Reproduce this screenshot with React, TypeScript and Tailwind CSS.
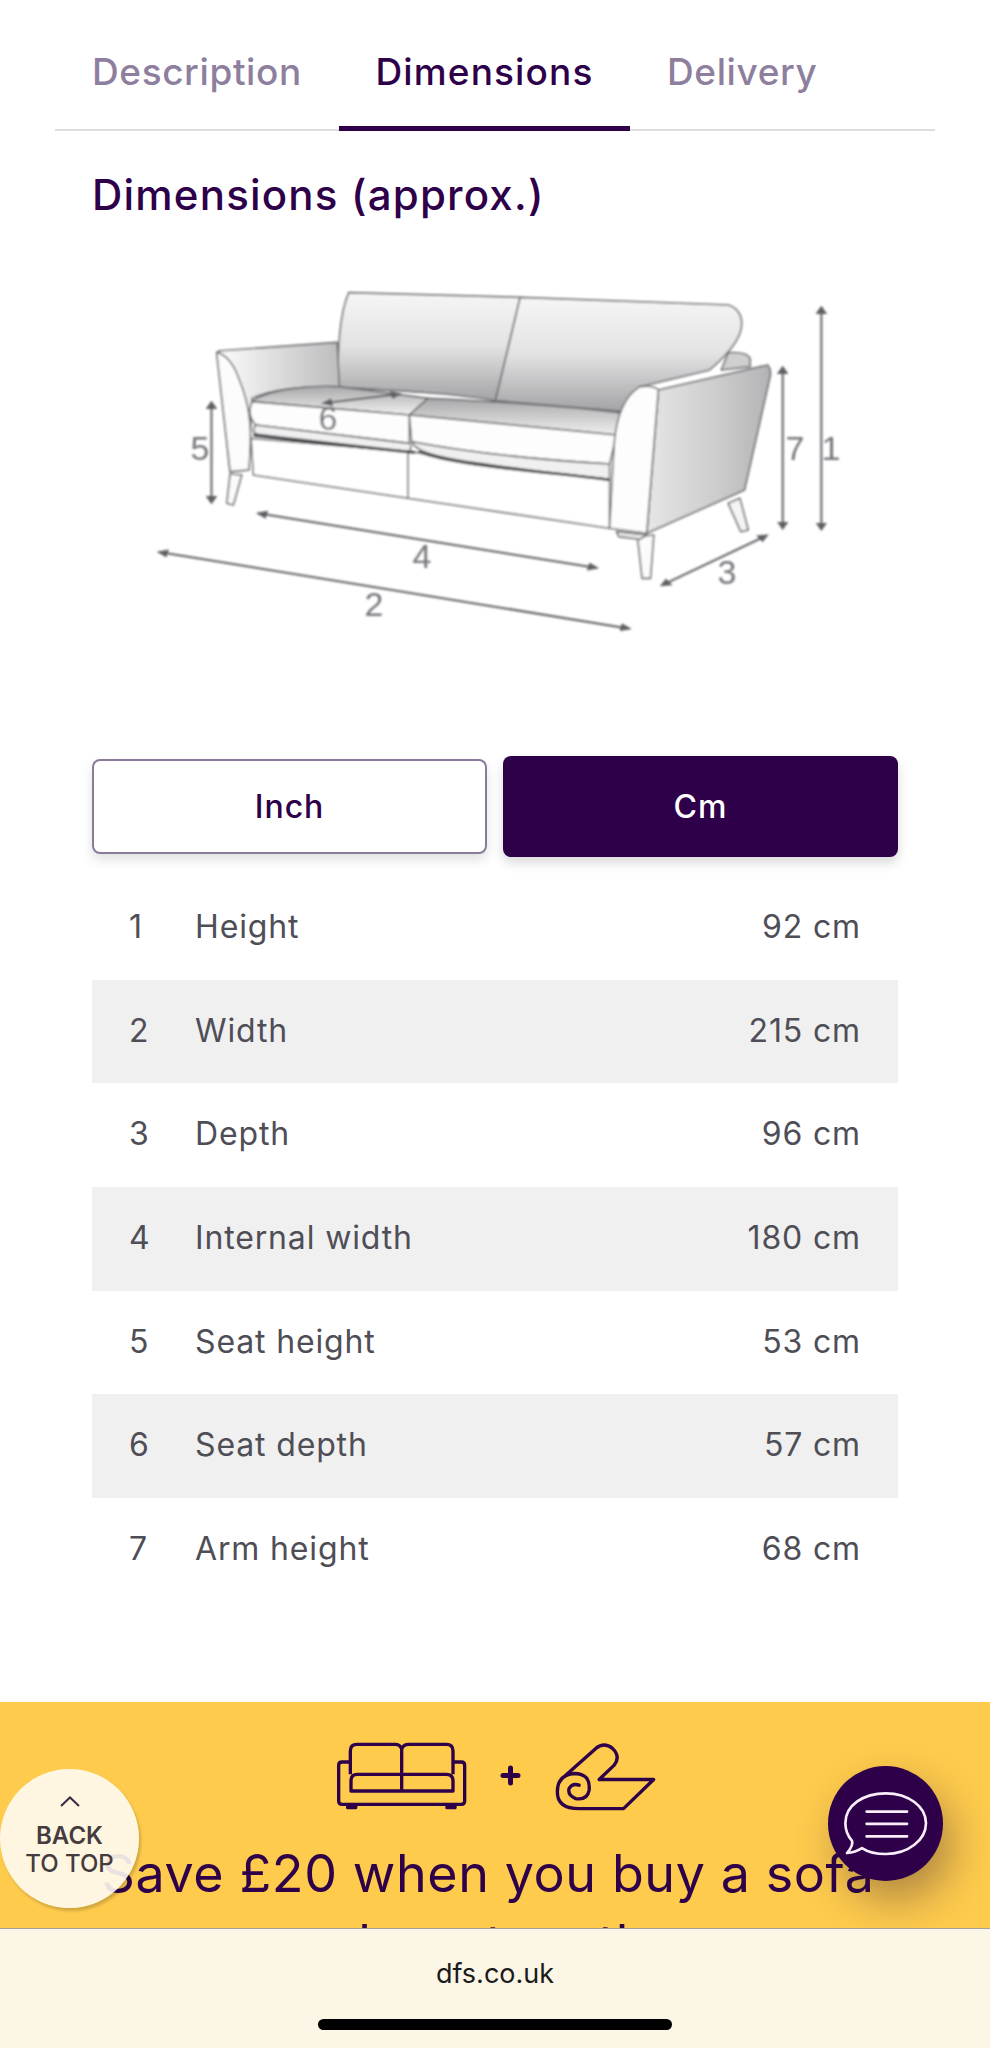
import React from "react";

const rows = [
  ["1", "Height", "92 cm"],
  ["2", "Width", "215 cm"],
  ["3", "Depth", "96 cm"],
  ["4", "Internal width", "180 cm"],
  ["5", "Seat height", "53 cm"],
  ["6", "Seat depth", "57 cm"],
  ["7", "Arm height", "68 cm"],
];

function Arrow({ x1, y1, x2, y2 }: { x1: number; y1: number; x2: number; y2: number }) {
  return (
    <line x1={x1} y1={y1} x2={x2} y2={y2} stroke="#5f5e63" strokeWidth="2" vectorEffect="non-scaling-stroke" markerStart="url(#ah)" markerEnd="url(#ah)" />
  );
}

function Sofa() {
  const line = { stroke: "#6d6c71", strokeWidth: 1.6, vectorEffect: "non-scaling-stroke" as const, strokeLinejoin: "round" as const };
  return (
    <svg viewBox="0 0 730 380" className="block w-[730px] h-[380px] ml-[130px]">
      <defs>
        <marker id="ah" viewBox="0 0 10 10" refX="8" refY="5" markerWidth="5" markerHeight="5" orient="auto-start-reverse">
          <path d="M0 0 L10 5 L0 10 Z" fill="#5f5e63" />
        </marker>
        <linearGradient id="bk" x1="0" y1="0" x2="0" y2="1">
          <stop offset="0" stopColor="#f6f6f6" />
          <stop offset="0.5" stopColor="#e2e2e3" />
          <stop offset="1" stopColor="#a3a3a5" />
        </linearGradient>
        <linearGradient id="side" x1="0" y1="0" x2="1" y2="0">
          <stop offset="0" stopColor="#e6e6e6" />
          <stop offset="0.6" stopColor="#cbcbcc" />
          <stop offset="1" stopColor="#b3b3b5" />
        </linearGradient>
        <linearGradient id="arm" x1="0" y1="0" x2="1" y2="0">
          <stop offset="0" stopColor="#fbfbfb" />
          <stop offset="1" stopColor="#bdbdbf" />
        </linearGradient>
        <linearGradient id="seat" x1="0" y1="0" x2="0" y2="1">
          <stop offset="0" stopColor="#a8a8aa" />
          <stop offset="1" stopColor="#f0f0f0" />
        </linearGradient>
        <filter id="soft"><feGaussianBlur stdDeviation="0.8" /></filter>
      </defs>
      <g filter="url(#soft)">
        <g transform="scale(0.46556 0.33333)">
          <path d="M1285 248 Q1325 245 1332 265 L1332 290 L1270 300 Z" fill="#cfcfd0" {...line} />
          <path d="M470 68 L838 82 L785 392 C700 370 560 360 447 352 C445 250 450 130 470 68 Z" fill="url(#bk)" {...line} />
          <path d="M838 82 L1285 105 C1310 115 1320 150 1310 190 C1300 230 1270 270 1245 300 L1095 350 L1060 425 L785 392 Z" fill="url(#bk)" {...line} />
          <path d="M190 243 L445 217 L450 352 C370 345 300 360 262 385 L255 600 L215 605 Z" fill="url(#arm)" {...line} />
          <path d="M186 247 L215 605 L255 600 C262 500 262 420 235 330 C225 290 210 255 186 247 Z" fill="#fcfcfc" {...line} />
          <path d="M260 505 L600 545 L1030 630 L1030 775 L265 615 Z" fill="#ffffff" {...line} />
          <path d="M597 540 L597 685" fill="none" {...line} />
          <path d="M262 395 C300 355 400 345 450 350 L640 385 L600 435 Z" fill="url(#seat)" {...line} />
          <path d="M640 385 C800 395 950 410 1058 430 L1045 495 L600 435 Z" fill="url(#seat)" {...line} />
          <path d="M262 395 L600 435 L600 520 L270 465 C255 440 255 420 262 395 Z" fill="#fdfdfd" {...line} />
          <path d="M600 435 L1045 495 L1030 582 C880 570 720 545 605 515 Z" fill="#fdfdfd" {...line} />
          <path d="M270 465 C262 480 265 490 275 493 C380 510 480 525 600 545 C605 530 605 525 600 520 Z" fill="#f0f0f0" {...line} />
          <path d="M605 515 C620 560 700 575 1030 628 L1030 582 C880 570 720 545 605 515 Z" fill="#f0f0f0" {...line} />
          <path d="M265 495 C340 508 480 530 612 548" fill="none" stroke="#38373e" strokeWidth="2.6" vectorEffect="non-scaling-stroke" />
          <path d="M620 545 C700 590 900 605 1030 630" fill="none" stroke="#38373e" strokeWidth="2.6" vectorEffect="non-scaling-stroke" />
          <path d="M1135 360 L1370 285 Q1378 300 1375 320 L1320 660 L1110 790 Z" fill="url(#side)" {...line} />
          <path d="M1095 350 Q1125 345 1135 360 L1110 790 L1030 775 L1040 520 C1045 440 1060 380 1095 350 Z" fill="#fdfdfd" {...line} />
          <path d="M215 612 L240 615 L222 705 L208 700 Z" fill="#fbfbfb" {...line} />
          <path d="M1285 700 L1310 685 L1328 780 L1312 785 Z" fill="#f4f4f4" {...line} />
          <path d="M1090 800 L1125 795 L1118 925 L1100 925 Z" fill="#fbfbfb" {...line} />
          <path d="M1045 785 L1110 795 L1095 808 L1050 800 Z" fill="#ececec" {...line} />
          <Arrow x1={1485} y1={112} x2={1485} y2={778} />
          <Arrow x1={1402} y1={292} x2={1402} y2={775} />
          <Arrow x1={175} y1={397} x2={175} y2={698} />
          <Arrow x1={415} y1={400} x2={580} y2={372} />
          <Arrow x1={275} y1={730} x2={1003} y2={894} />
          <Arrow x1={62} y1={846} x2={1073} y2={1076} />
          <Arrow x1={1142} y1={946} x2={1368} y2={796} />
        </g>
        <g fontFamily="'Liberation Sans', sans-serif" fontSize="34" fill="#77767b" textAnchor="middle">
          <text x="701" y="190">1</text>
          <text x="665" y="190">7</text>
          <text x="70" y="190">5</text>
          <text x="198" y="160">6</text>
          <text x="292" y="298">4</text>
          <text x="244" y="346">2</text>
          <text x="597" y="314">3</text>
        </g>
      </g>
    </svg>
  );
}

export default function App() {
  return (
    <div className="relative w-[990px] h-[2048px] overflow-hidden bg-white font-['Inter',sans-serif]">
      {/* Tabs */}
      <div className="mx-[55px] h-[131px] flex items-stretch border-b-2 border-[#dddcdf]">
        <div className="w-[284px] px-[37px] pt-[47px] text-[37px] leading-[50px] tracking-[0.6px] font-medium whitespace-nowrap text-[#8e7f9e]">Description</div>
        <div className="-mb-[2px] pt-[47px] w-[291px] text-center border-b-[5px] border-[#2e0049] text-[37px] leading-[50px] tracking-[1.15px] font-medium text-[#2e0049]">Dimensions</div>
        <div className="px-[37px] pt-[47px] text-[37px] leading-[50px] tracking-[0.6px] font-medium text-[#8e7f9e]">Delivery</div>
      </div>

      <h2 className="mt-[34px] ml-[92px] text-[42px] leading-[60px] tracking-[1.2px] font-medium text-[#2e0049]">Dimensions (approx.)</h2>

      <div className="mt-[45px]">
        <Sofa />
      </div>

      {/* Unit buttons */}
      <div className="mt-[106px] mx-[92px] grid grid-cols-2 gap-4 h-[101px]">
        <div className="my-[3px] flex items-center justify-center rounded-[8px] border-2 border-[#8b7b9b] bg-white text-[32px] tracking-[1px] font-medium text-[#2e0049] shadow-[0_6px_12px_rgba(0,0,0,0.12)]">Inch</div>
        <div className="flex items-center justify-center rounded-[8px] bg-[#2e0049] text-[32px] tracking-[1px] font-medium text-white shadow-[0_6px_12px_rgba(0,0,0,0.15)]">Cm</div>
      </div>

      {/* Table */}
      <div className="mt-[19px] mx-[92px]">
        {rows.map(([n, name, val], i) => (
          <div key={n} className={`flex items-center h-[103.7px] pb-[2px] text-[32px] tracking-[0.85px] text-[#4f4e56] ${i % 2 === 1 ? "bg-[#f0f0f1]" : ""}`}>
            <span className="ml-[37px] w-[66px]">{n}</span>
            <span>{name}</span>
            <span className="ml-auto mr-[37px]">{val}</span>
          </div>
        ))}
      </div>

      {/* Banner */}
      <div className="mt-[100px] bg-[#fecb4d] pt-[40px] h-[400px] flex flex-col items-center">
        <div className="flex items-center h-[68px] ml-[2px]">
          <svg viewBox="50 65 390 210" className="w-[130px] h-[70px]" fill="none" stroke="#2e0049" strokeWidth="10" strokeLinejoin="round">
            <path d="M90 165 V95 Q90 75 110 75 H225 Q238 75 244 88 Q250 75 265 75 H378 Q398 75 398 95 V165" />
            <path d="M244 88 V215" />
            <path d="M92 215 H398 V185 Q398 165 378 165 H110 Q92 165 92 185 Z" />
            <path d="M90 128 H65 Q55 128 55 138 V245 Q55 255 65 255 H423 Q433 255 433 245 V138 Q433 128 423 128 H398" />
            <path d="M82 255 V265 H106 V255 M380 255 V265 H404 V255" />
          </svg>
          <svg viewBox="0 0 21 21" className="ml-[33px] w-[21px] h-[21px]" stroke="#2e0049" strokeWidth="5" strokeLinecap="round">
            <path d="M10.5 3 V18 M3 10.5 H18" />
          </svg>
          <svg viewBox="700 60 305 215" className="ml-[33px] w-[102px] h-[72px]" fill="none" stroke="#2e0049" strokeWidth="10" strokeLinejoin="round" strokeLinecap="round">
            <path d="M735 165 L825 85 Q850 65 875 85 Q900 110 880 135 L835 178 H998 L908 265 H775 Q710 265 710 215 Q710 165 760 160 Q810 160 805 210 Q800 240 765 235 Q740 225 745 205 Q755 188 775 195" />
          </svg>
        </div>
        <div className="mt-[29px] w-[800px] pr-[14px] text-center text-[52px] leading-[70px] tracking-[0.6px] text-[#2e0049]">
          Save £20 when you buy a sofa and rug together
        </div>
      </div>

      {/* Back to top */}
      <div className="absolute left-0 top-[1769px] w-[139px] h-[139px] rounded-full bg-[#fffbf2]/90 shadow-[2px_3px_3px_rgba(0,0,0,0.18)] flex flex-col items-center text-[24px] leading-[28px] font-medium text-[#453c3e]">
        <svg viewBox="0 0 20 11" className="mt-[27px] mb-[15px] w-[20px] h-[11px]" fill="none" stroke="#3c2a44" strokeWidth="2">
          <path d="M1 10 L10 1.5 L19 10" />
        </svg>
        <span className="font-semibold">BACK</span>
        <span className="whitespace-nowrap">TO TOP</span>
      </div>

      {/* Chat */}
      <div className="absolute left-[828px] top-[1766px] w-[115px] h-[115px] rounded-full bg-[#2e0049] shadow-[10px_20px_40px_rgba(40,20,50,0.35)] flex items-center justify-center">
        <svg viewBox="130 145 265 205" className="w-[88px] h-[68px]" fill="none" stroke="#f9eefa" strokeWidth="8" strokeLinejoin="round" strokeLinecap="round">
          <path d="M145 335 Q165 312 160 298 Q140 275 140 245 C140 190 195 155 262 155 C330 155 383 195 383 245 C383 295 330 338 262 338 C235 338 210 333 190 320 Q170 333 145 335 Z" />
          <path d="M204 210 H326 M204 247 H326 M204 285 H326" />
        </svg>
      </div>

      {/* Browser bar */}
      <div className="absolute left-0 right-0 bottom-0 h-[120px] bg-[#fcf6e6] border-t border-[#a3a09a] flex flex-col items-center">
        <div className="mt-[27px] text-[27px] leading-[36px] text-[#1a1a1a]">dfs.co.uk</div>
        <div className="mt-[27px] w-[354px] h-[11px] rounded-full bg-black" />
      </div>
    </div>
  );
}
